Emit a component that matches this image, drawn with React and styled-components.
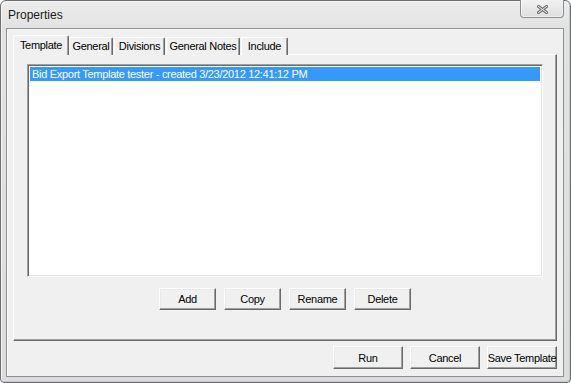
import React from "react";
import styled, { createGlobalStyle } from "styled-components";

const Global = createGlobalStyle`
  html, body { margin: 0; padding: 0; background: #ffffff; }
  body { font-family: "Liberation Sans", Arial, sans-serif; font-size: 11px; letter-spacing: -0.3px; }
`;

const Window = styled.div`
  box-sizing: border-box;
  width: 571px;
  height: 383px;
  border: 1px solid #6b6f73;
  border-radius: 6px 6px 4px 4px;
  background: linear-gradient(180deg, #ececec 0px, #e2e2e2 28px, #dcdcdc 100%);
  box-shadow: inset 1px 1px 0 #f7f7f7, inset -1px -1px 0 #c9c9c9;
  display: flex;
  flex-direction: column;
  padding: 0 6px 5px 5px;
`;

const TitleBar = styled.div`
  height: 27px;
  display: flex;
  align-items: flex-start;
  justify-content: space-between;
`;

const Title = styled.div`
  font-family: "Liberation Sans", Arial, sans-serif;
  font-size: 12px;
  letter-spacing: 0;
  color: #1a1a1a;
  padding: 7px 0 0 2px;
`;

const CloseButton = styled.div`
  box-sizing: border-box;
  width: 44px;
  height: 18px;
  margin-top: -1px;
  border: 1px solid #8c8c8c;
  border-top: none;
  border-radius: 0 0 4px 4px;
  background: linear-gradient(180deg, #f2f2f2, #dedede);
  box-shadow: inset 1px 0 0 #fafafa, inset -1px -1px 0 #f0f0f0;
  display: flex;
  align-items: center;
  justify-content: center;
  padding-top: 1px;
`;

const Client = styled.div`
  box-sizing: border-box;
  flex: 1;
  border: 1px solid #8e8f8f;
  background: #f0f0f0;
  box-shadow: inset 1px 1px 0 #fbfbfb;
  padding: 6px 6px 7px 6px;
  display: flex;
  flex-direction: column;
`;

const TabStrip = styled.div`
  display: flex;
  align-items: flex-end;
  height: 20px;
  margin-bottom: -1px;
  padding-left: 1px;
  position: relative;
  z-index: 1;
`;

const Tab = styled.div`
  box-sizing: border-box;
  width: ${(p) => p.$w}px;
  height: ${(p) => (p.$active ? "20px" : "18px")};
  margin-left: ${(p) => (p.$active ? "-1px" : "0")};
  margin-right: ${(p) => (p.$active ? "0" : "1px")};
  padding-top: ${(p) => (p.$active ? "3px" : "2px")};
  text-align: center;
  border-top: 1px solid #ffffff;
  border-left: 1px solid #ffffff;
  border-right: 1px solid #696969;
  box-shadow: inset -1px 0 0 #a0a0a0;
  border-radius: 2px 2px 0 0;
  background: #f0f0f0;
  color: #000;
  font-size: 11px;
  line-height: 13px;
  white-space: nowrap;
`;

const Panel = styled.div`
  box-sizing: border-box;
  height: 287px;
  border-top: 1px solid #ffffff;
  border-left: 1px solid #ffffff;
  border-right: 1px solid #696969;
  border-bottom: 1px solid #696969;
  box-shadow: inset -1px -1px 0 #a0a0a0;
  display: flex;
  flex-direction: column;
  padding: 9px 13px 0 13px;
`;

const ListBox = styled.div`
  box-sizing: border-box;
  height: 213px;
  background: #ffffff;
  border-top: 1px solid #a0a0a0;
  border-left: 1px solid #a0a0a0;
  border-right: 1px solid #ffffff;
  border-bottom: 1px solid #ffffff;
  box-shadow: inset 1px 1px 0 #696969, inset -1px -1px 0 #e3e3e3;
  padding: 2px;
`;

const ListItem = styled.div`
  height: 14px;
  line-height: 14px;
  padding-left: 2px;
  font-size: 11px;
  background: ${(p) => (p.$selected ? "#3399ff" : "transparent")};
  color: ${(p) => (p.$selected ? "#ffffff" : "#000000")};
  white-space: nowrap;
`;

const ButtonRow = styled.div`
  display: flex;
  justify-content: ${(p) => p.$justify || "center"};
  gap: ${(p) => p.$gap || 8}px;
  margin-top: ${(p) => p.$top || 0}px;
`;

const Button = styled.div`
  box-sizing: border-box;
  width: ${(p) => p.$w}px;
  height: ${(p) => p.$h}px;
  border-top: 1px solid #ffffff;
  border-left: 1px solid #ffffff;
  border-right: 1px solid #696969;
  border-bottom: 1px solid #696969;
  box-shadow: inset -1px -1px 0 #a0a0a0, inset 1px 1px 0 #e9e9e9;
  background: #f0f0f0;
  display: flex;
  align-items: center;
  justify-content: center;
  font-size: 11px;
  color: #000;
  white-space: nowrap;
`;

const CloseIcon = () => (
  <svg width="11" height="9" viewBox="0 0 11 9">
    <path
      d="M1.5 1.5 L9.5 7.5 M9.5 1.5 L1.5 7.5"
      stroke="#707070"
      strokeWidth="3"
      strokeLinecap="square"
      fill="none"
    />
    <path
      d="M1.5 1.5 L9.5 7.5 M9.5 1.5 L1.5 7.5"
      stroke="#f2f2f2"
      strokeWidth="1"
      strokeLinecap="square"
      fill="none"
    />
  </svg>
);

const tabs = [
  { label: "Template", w: 56 },
  { label: "General", w: 44 },
  { label: "Divisions", w: 51 },
  { label: "General Notes", w: 74 },
  { label: "Include", w: 47 },
];

export default function App() {
  return (
    <>
      <Global />
      <Window>
        <TitleBar>
          <Title>Properties</Title>
          <CloseButton>
            <CloseIcon />
          </CloseButton>
        </TitleBar>
        <Client>
          <TabStrip>
            {tabs.map((t, i) => (
              <Tab key={t.label} $active={i === 0} $w={t.w}>
                {t.label}
              </Tab>
            ))}
          </TabStrip>
          <Panel>
            <ListBox>
              <ListItem $selected>
                Bid Export Template tester - created 3/23/2012 12:41:12 PM
              </ListItem>
            </ListBox>
            <ButtonRow $top={11} $gap={8}>
              <Button $w={57} $h={22}>Add</Button>
              <Button $w={57} $h={22}>Copy</Button>
              <Button $w={57} $h={22}>Rename</Button>
              <Button $w={57} $h={22}>Delete</Button>
            </ButtonRow>
          </Panel>
          <ButtonRow $top={5} $gap={7} $justify="flex-end">
            <Button $w={70} $h={23}>Run</Button>
            <Button $w={70} $h={23}>Cancel</Button>
            <Button $w={70} $h={23}>Save Template</Button>
          </ButtonRow>
        </Client>
      </Window>
    </>
  );
}
